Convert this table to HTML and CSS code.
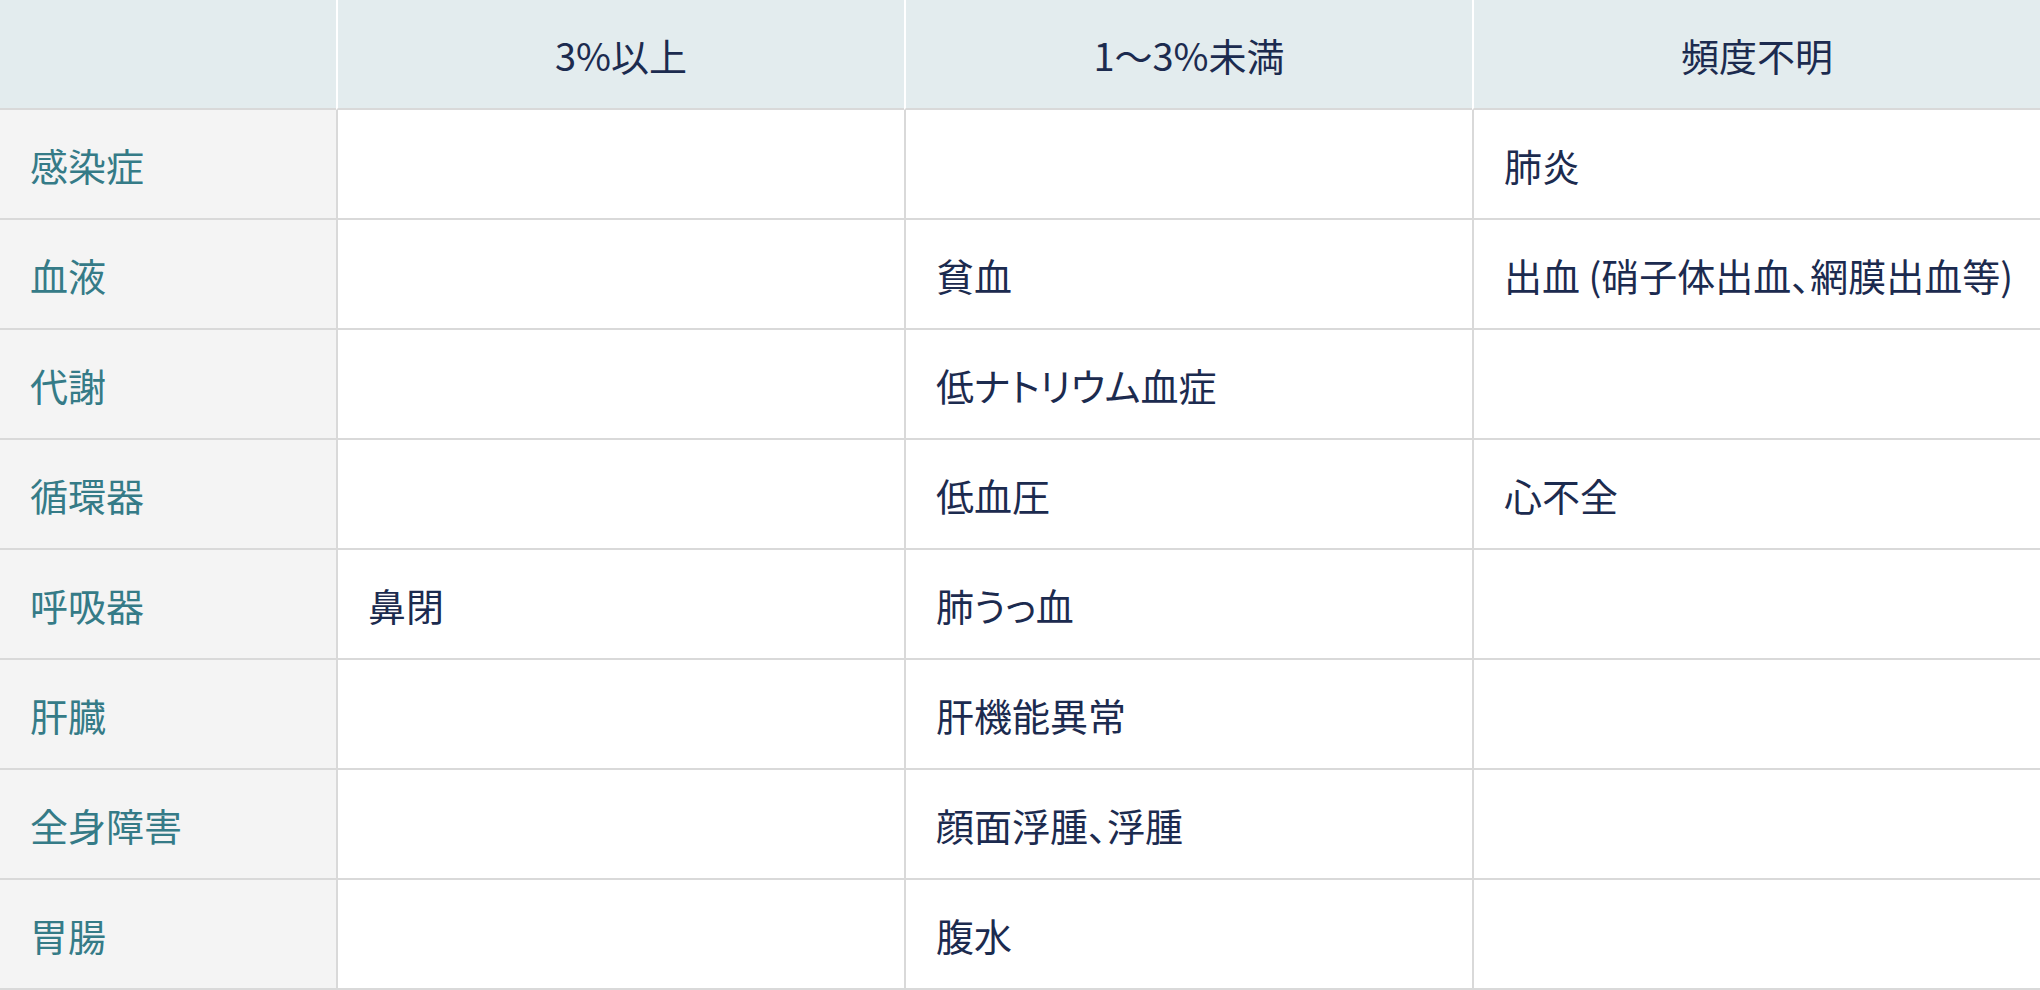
FILE: index.html
```html
<html lang="ja">

<head>
    <meta charset="UTF-8">
    <meta name="viewport" content="width=device-width, initial-scale=1.0">
    <title>副作用</title>
    <link rel="stylesheet" href="styles.css">
</head>

<body>
    <table class="sideTable">
        <colgroup>
            <col class="col-label">
            <col class="col-freq">
            <col class="col-freq">
            <col>
        </colgroup>
        <thead>
            <tr>
                <th></th>
                <th>3%以上</th>
                <th>1～3%未満</th>
                <th>頻度不明</th>
            </tr>
        </thead>
        <tbody>
            <tr>
                <th>感染症</th>
                <td></td>
                <td></td>
                <td>肺炎</td>
            </tr>
            <tr>
                <th>血液</th>
                <td></td>
                <td>貧血</td>
                <td>出血 (硝子体出血、網膜出血等)</td>
            </tr>
            <tr>
                <th>代謝</th>
                <td></td>
                <td>低ナトリウム血症</td>
                <td></td>
            </tr>
            <tr>
                <th>循環器</th>
                <td></td>
                <td>低血圧</td>
                <td>心不全</td>
            </tr>
            <tr>
                <th>呼吸器</th>
                <td>鼻閉</td>
                <td>肺うっ血</td>
                <td></td>
            </tr>
            <tr>
                <th>肝臓</th>
                <td></td>
                <td>肝機能異常</td>
                <td></td>
            </tr>
            <tr>
                <th>全身障害</th>
                <td></td>
                <td>顔面浮腫、浮腫</td>
                <td></td>
            </tr>
            <tr>
                <th>胃腸</th>
                <td></td>
                <td>腹水</td>
                <td></td>
            </tr>
        </tbody>
    </table>
</body>

</html>
```

FILE: styles.css
```css
body {
    margin: 0;
    background-color: white;
    font-family: "Noto Sans CJK JP", "Noto Sans", sans-serif;
    color: #1c2b4f;
    overflow: hidden;
}

.sideTable {
    width: 2040px;
    border-collapse: separate;
    border-spacing: 0;
    table-layout: fixed;
    font-size: 38px;
    font-feature-settings: "palt";
}

.col-label {
    width: 336px;
}

.col-freq {
    width: 568px;
}

.sideTable th,
.sideTable td {
    height: 110px;
    padding: 0 30px;
    border-bottom: 2px solid #d9d9d9;
    font-weight: 400;
    text-align: left;
    vertical-align: middle;
    white-space: nowrap;
}

.sideTable th + th,
.sideTable th + td,
.sideTable td + td {
    border-left: 2px solid #d9d9d9;
}

.sideTable thead th {
    background-color: #e3ecee;
    text-align: center;
    height: 110px;
}

.sideTable thead th + th {
    border-left-color: white;
}

.sideTable tbody th {
    background-color: #f4f4f4;
    color: #357b87;
}
```
